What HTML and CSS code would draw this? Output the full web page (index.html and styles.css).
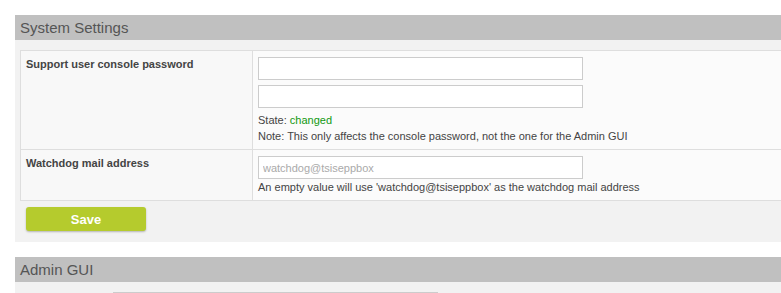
FILE: index.html
```html
<!DOCTYPE html>
<html>
<head>
<meta charset="utf-8">
<link rel="stylesheet" href="styles.css">
</head>
<body>
<div class="page">
  <section class="section">
    <h2 class="section-title">System Settings</h2>
    <div class="section-body">
      <table class="settings">
        <tr>
          <th class="label">Support user console password</th>
          <td class="value">
            <input class="field" type="password">
            <input class="field" type="password">
            <div class="hint state">State: <span class="ok">changed</span></div>
            <div class="hint note">Note: This only affects the console password, not the one for the Admin GUI</div>
          </td>
        </tr>
        <tr>
          <th class="label">Watchdog mail address</th>
          <td class="value">
            <input class="field tight" type="text" placeholder="watchdog@tsiseppbox">
            <div class="hint">An empty value will use 'watchdog@tsiseppbox' as the watchdog mail address</div>
          </td>
        </tr>
      </table>
      <div class="actions"><button class="btn-save" type="button">Save</button></div>
    </div>
  </section>
  <section class="section">
    <h2 class="section-title">Admin GUI</h2>
    <div class="section-body admin-body">
      <input class="field admin-field" type="text">
    </div>
  </section>
</div>
</body>
</html>
```
FILE: styles.css
```css
html, body {
  margin: 0;
  padding: 0;
  overflow: hidden;
  background: #fff;
}
body {
  font-family: "Liberation Sans", Arial, sans-serif;
  color: #444;
}
.page {
  padding: 15px 0 0 15px;
  width: 1000px;
}
.section {
  margin-bottom: 15px;
}
.section-title {
  margin: 0;
  height: 25px;
  line-height: 25px;
  background: #c0c0c0;
  color: #555;
  font-size: 15px;
  font-weight: normal;
  padding-left: 5px;
}
.section-body {
  background: #f2f2f2;
  padding: 10px 5px 11px 5px;
}
.settings {
  border-collapse: collapse;
  width: 100%;
}
.settings th, .settings td {
  border: 1px solid #dedede;
  vertical-align: top;
  text-align: left;
}
.label {
  width: 221px;
  background: #f8f8f8;
  font-size: 11px;
  font-weight: bold;
  color: #444;
  padding: 6px 5px 5px 5px;
  line-height: 14px;
}
.value {
  background: #fbfbfb;
  padding: 6px 5px 5px 5px;
}
.field {
  display: block;
  box-sizing: border-box;
  width: 325px;
  height: 23px;
  margin: 0 0 5px 0;
  border: 1px solid #ccc;
  background: #fff;
  font-family: "Liberation Sans", Arial, sans-serif;
  font-size: 11px;
  padding: 2px 4px;
  outline: none;
}
.field.tight {
  margin-bottom: 1px;
}
.field::placeholder {
  color: #aaa;
}
.hint {
  font-size: 11px;
  line-height: 15px;
  color: #444;
}
.hint.state {
  margin-top: 1px;
}
.hint.note {
  margin-top: 1px;
}
.ok {
  color: #119911;
}
.actions {
  padding: 6px 0 0 6px;
}
.btn-save {
  display: block;
  width: 120px;
  height: 24px;
  border: none;
  border-radius: 3px;
  background: #b5cb2d;
  color: #fff;
  font-family: "Liberation Sans", Arial, sans-serif;
  font-size: 13px;
  font-weight: bold;
  box-shadow: 0 1px 2px rgba(0,0,0,0.25);
  padding: 0;
}
.admin-body {
  padding-left: 98px;
}
.admin-field {
  margin: 0;
}
```
